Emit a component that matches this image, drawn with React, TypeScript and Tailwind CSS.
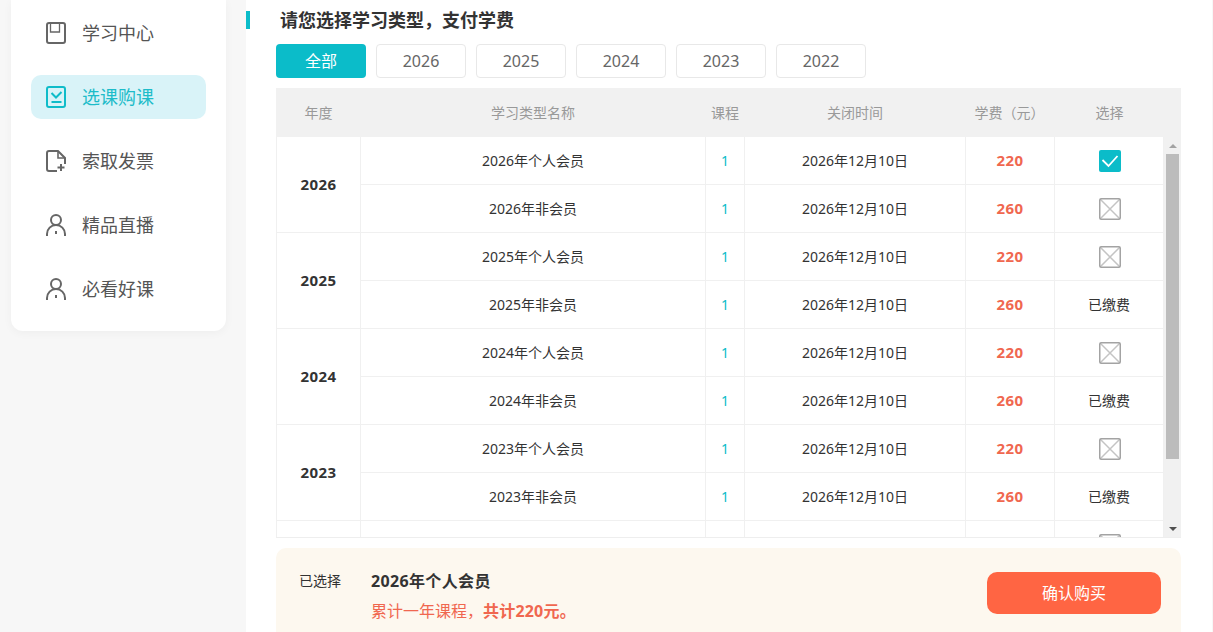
import React from 'react'

const font = { fontFamily: '"Noto Sans", "Noto Sans CJK SC", sans-serif' }

const BookIcon = () => (
  <svg width="20" height="22" viewBox="0 0 20 22" fill="none" stroke="#666" strokeWidth="2">
    <rect x="1" y="1" width="18" height="20" rx="2" />
    <path d="M4.500 1v9h9V1" strokeWidth="1.300" />
  </svg>
)

const CheckIcon = () => (
  <svg width="20" height="22" viewBox="0 0 20 22" fill="none" stroke="#0fbcc9" strokeWidth="2">
    <rect x="1" y="1" width="18" height="20" rx="2" />
    <path d="M5.500 7l4.500 4.500L15.500 6" />
    <path d="M5.500 16h10" />
  </svg>
)

const FileIcon = () => (
  <svg width="20" height="22" viewBox="0 0 20 22" fill="none" stroke="#666" strokeWidth="2">
    <path d="M11 21H3a2 2 0 0 1-2-2V3a2 2 0 0 1 2-2h9l7 7v6" />
    <path d="M12 1v7h7" strokeWidth="1.600" />
    <path d="M15 14v7M11.500 17.500h7" />
  </svg>
)

const UserIcon = () => (
  <svg width="20" height="22" viewBox="0 0 20 22" fill="none" stroke="#666" strokeWidth="2">
    <circle cx="10" cy="6" r="5" />
    <path d="M1 22v-2a9 9 0 0 1 18 0v2" />
    <path d="M10 17v3" />
  </svg>
)

const nav = [
  { label: '学习中心', icon: <BookIcon /> },
  { label: '选课购课', icon: <CheckIcon />, active: true },
  { label: '索取发票', icon: <FileIcon /> },
  { label: '精品直播', icon: <UserIcon /> },
  { label: '必看好课', icon: <UserIcon /> },
]

const Sidebar = () => (
  <div className="ml-[11px] w-[215px] h-[331px] shrink-0 bg-white rounded-b-xl pt-[11px] px-[20px] flex flex-col gap-[20px] shadow-[0_2px_10px_rgba(0,0,0,0.04)]">
    {nav.map((item) => (
      <div
        key={item.label}
        className={`h-[44px] w-[175px] rounded-[10px] flex items-center pl-[15px] gap-[16px] text-[18px] ${
          item.active ? 'bg-[#d9f3f8] text-[#1dbcc9]' : 'text-[#555]'
        }`}
      >
        {item.icon}
        <span>{item.label}</span>
      </div>
    ))}
  </div>
)

const Checked = () => (
  <svg width="22" height="22" viewBox="0 0 22 22" className="ml-[44px] block">
    <rect width="22" height="22" rx="2" fill="#0bbcc9" />
    <path d="M3.500 10l6 6 9-10" fill="none" stroke="#fff" strokeWidth="1.800" />
  </svg>
)

const Unchecked = () => (
  <svg width="22" height="22" viewBox="0 0 22 22" fill="none" className="ml-[44px] block">
    <path d="M1 1l20 20M21 1L1 21" stroke="#c4c4c4" strokeWidth="1.500" />
    <rect x="0.750" y="0.750" width="20.500" height="20.500" rx="1.500" stroke="#a3a3a3" strokeWidth="1.500" />
  </svg>
)

type State = 'checked' | 'empty' | 'paid'

const years: { year: number; first: State; second: State }[] = [
  { year: 2026, first: 'checked', second: 'empty' },
  { year: 2025, first: 'empty', second: 'paid' },
  { year: 2024, first: 'empty', second: 'paid' },
  { year: 2023, first: 'empty', second: 'paid' },
]

const cell = 'border-r border-b border-[#f0f0f0] text-center'

const Select = ({ state }: { state: State }) => {
  if (state === 'checked') return <Checked />
  if (state === 'empty') return <Unchecked />
  return <>已缴费</>
}

const FeeTable = () => (
  <div className="w-[905px] mt-[10px] text-[14px]">
    <div className="flex h-[49px] items-center bg-[#f1f1f1] text-[#999] text-center">
      <div className="w-[85px]">年度</div>
      <div className="w-[344px]">学习类型名称</div>
      <div className="w-[40px]">课程</div>
      <div className="w-[220px]">关闭时间</div>
      <div className="w-[89px]">学费（元）</div>
      <div className="w-[111px]">选择</div>
    </div>
    <div className="flex h-[401px] border-b border-[#eee]">
      <div className="w-[888px] overflow-hidden border-l border-[#f0f0f0]">
        <table className="w-[887px] table-fixed border-separate border-spacing-0 text-[#333]">
          <colgroup>
            <col className="w-[84px]" />
            <col className="w-[345px]" />
            <col className="w-[39px]" />
            <col className="w-[221px]" />
            <col className="w-[89px]" />
            <col className="w-[109px]" />
          </colgroup>
          <tbody>
            {years.map(({ year, first, second }) =>
              [0, 1].map((i) => (
                <tr key={`${year}-${i}`} className="h-[48px]">
                  {i === 0 && (
                    <td rowSpan={2} className={`${cell} font-bold text-[15px] tracking-[0.4px]`}>
                      {year}
                    </td>
                  )}
                  <td className={cell}>{year}年{i === 0 ? '个人会员' : '非会员'}</td>
                  <td className={`${cell} text-[#0bbcc9]`}>1</td>
                  <td className={cell}>2026年12月10日</td>
                  <td className={`${cell} font-bold text-[15px] tracking-[0.4px] text-[#f0674f]`}>{i === 0 ? 220 : 260}</td>
                  <td className={cell}>
                    <Select state={i === 0 ? first : second} />
                  </td>
                </tr>
              )),
            )}
            {/* next row is scrolled off, only its top shows */}
            <tr>
              <td className="border-r border-[#f0f0f0]" />
              <td className="border-r border-[#f0f0f0]" />
              <td className="border-r border-[#f0f0f0]" />
              <td className="border-r border-[#f0f0f0]" />
              <td className="border-r border-[#f0f0f0]" />
              <td className="border-r border-[#f0f0f0] pt-[13px]">
                <Unchecked />
              </td>
            </tr>
          </tbody>
        </table>
      </div>
      <div className="w-[17px] bg-[#f1f1f1] flex flex-col items-center">
        <div className="h-[17px] flex items-center justify-center">
          <div className="w-0 h-0 border-x-[4px] border-x-transparent border-b-[4px] border-b-[#a3a3a3]" />
        </div>
        <div className="w-[13px] h-[305px] bg-[#bcbcbc]" />
        <div className="flex-1" />
        <div className="h-[17px] flex items-center justify-center">
          <div className="w-0 h-0 border-x-[4px] border-x-transparent border-t-[4px] border-t-[#505050]" />
        </div>
      </div>
    </div>
  </div>
)

const tabs = ['全部', '2026', '2025', '2024', '2023', '2022']

export default function App() {
  return (
    <div style={font} className="h-[632px] overflow-hidden bg-[#f7f7f7] flex gap-[20px]">
      <Sidebar />
      <div className="w-[966px] h-[632px] bg-white pt-[11px]">
        <div className="flex items-center h-[18px] gap-[30px]">
          <div className="w-[4px] h-[18px] bg-[#0bbcc9]" />
          <h2 className="text-[18px] font-bold text-[#333] whitespace-nowrap">请您选择学习类型，支付学费</h2>
        </div>
        <div className="pl-[30px]">
          <div className="flex gap-[10px] mt-[15px]">
            {tabs.map((t, i) => (
              <div
                key={t}
                className={`w-[90px] h-[34px] rounded-[4px] flex items-center justify-center text-[16px] ${
                  i === 0 ? 'bg-[#0bbcc9] text-white' : 'border border-[#e8e8e8] text-[#666]'
                }`}
              >
                {t}
              </div>
            ))}
          </div>
          <FeeTable />
          <div className="w-[905px] h-[84px] mt-[10px] rounded-t-[10px] bg-[#fdf8ef] flex items-start pt-[24px] pl-[23px] pr-[20px]">
            <div className="w-[72px] text-[14px] text-[#333] leading-[18px]">已选择</div>
            <div className="flex-1">
              <div className="text-[16px] font-bold text-[#333] leading-[18px] tracking-[0.35px]">2026年个人会员</div>
              <div className="text-[16px] text-[#f0674f] leading-[22px] mt-[10px]">
                累计一年课程，<span className="font-bold tracking-[0.2px]">共计220元。</span>
              </div>
            </div>
            <button className="w-[174px] h-[42px] rounded-[10px] bg-[#ff6543] text-white text-[16px]">确认购买</button>
          </div>
        </div>
      </div>
    </div>
  )
}
